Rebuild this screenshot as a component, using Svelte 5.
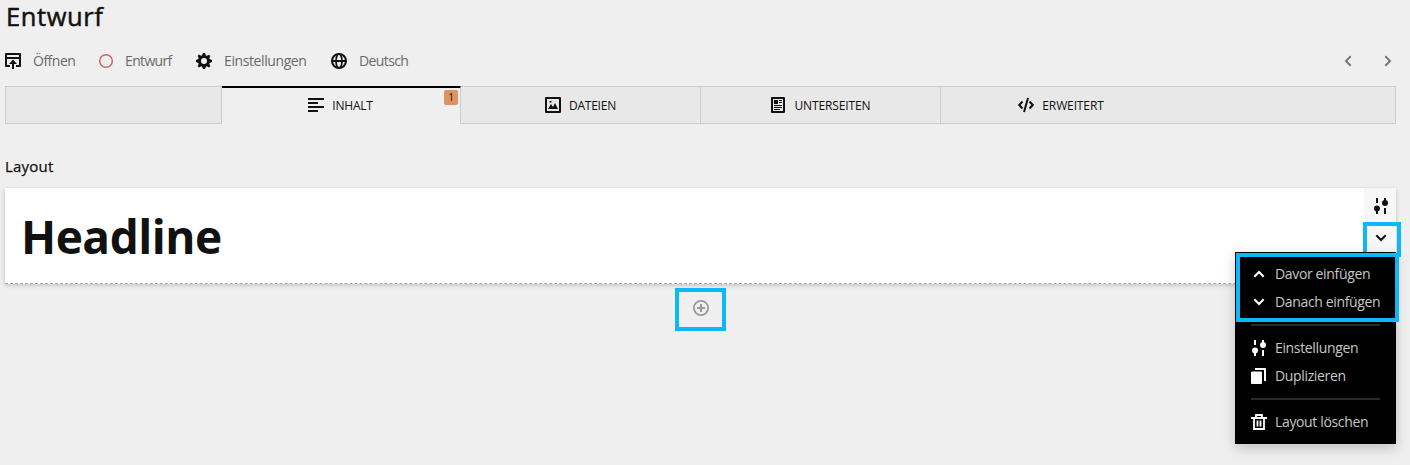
<script>
  const actions = [
    { icon: 'open', text: 'Öffnen', width: 93, ls: -0.5 },
    { icon: 'circle', text: 'Entwurf', width: 98, ls: -0.65 },
    { icon: 'cog', text: 'Einstellungen', width: 135, ls: -0.4 },
    { icon: 'globe', text: 'Deutsch', width: 90, ls: -0.6 }
  ];
  const tabs = [
    { icon: 'text', text: 'INHALT', badge: 1, active: true, ls: -0.2 },
    { icon: 'image', text: 'DATEIEN', ls: -0.25 },
    { icon: 'page', text: 'UNTERSEITEN', ls: -0.12 },
    { icon: 'code', text: 'ERWEITERT', ls: -0.12 }
  ];
  const groups = [
    [{ icon: 'up', text: 'Davor einfügen' }, { icon: 'down', text: 'Danach einfügen' }],
    [{ icon: 'settings', text: 'Einstellungen' }, { icon: 'copy', text: 'Duplizieren' }],
    [{ icon: 'trash', text: 'Layout löschen' }]
  ];
</script>

{#snippet icon(name)}
  <svg class="icon {name}" width="16" height="16" viewBox="0 0 16 16" fill="currentColor" aria-hidden="true">
    {#if name === 'open'}
      <path d="M1 0h14a1 1 0 0 1 1 1v12a1 1 0 0 1-1 1h-4v-2h3V6H2v6h3v2H1a1 1 0 0 1-1-1V1a1 1 0 0 1 1-1zm1 2v2h12V2z" fill-rule="evenodd" />
      <path d="M8 6.5 12 11H9v5H7v-5H4z" />
    {:else if name === 'circle'}
      <circle cx="8" cy="8" r="6.3" fill="none" stroke="currentColor" stroke-width="1.5" />
    {:else if name === 'cog'}
      <path fill-rule="evenodd" d="M13.3 5.2l1.1-2.1L13 1.7l-2.1 1.1c-.3-.2-.7-.3-1-.4L9 0H7l-.9 2.3c-.4.1-.7.2-1 .4L3 1.6 1.6 3l1.1 2.1c-.2.3-.3.7-.4 1L0 7v2l2.3.9c.1.4.3.7.4 1L1.6 13 3 14.4l2.1-1.1c.3.2.7.3 1 .4L7 16h2l.9-2.3c.4-.1.7-.3 1-.4l2.1 1.1 1.4-1.4-1.1-2.1c.2-.3.3-.7.4-1L16 9V7l-2.3-.9c-.1-.3-.2-.6-.4-.9zM8 11a3 3 0 1 1 0-6 3 3 0 0 1 0 6z" />
    {:else if name === 'globe'}
      <g fill="none" stroke="currentColor"><circle cx="8" cy="8" r="7" stroke-width="2" /><ellipse cx="8" cy="8" rx="3" ry="7" stroke-width="1.7" /><path d="M1 8h14" stroke-width="2" /></g>
    {:else if name === 'text'}
      <path d="M0 1h16v2H0zm0 4h10v2H0zm0 4h16v2H0zm0 4h10v2H0z" />
    {:else if name === 'image'}
      <path fill-rule="evenodd" d="M1 0h14a1 1 0 0 1 1 1v14a1 1 0 0 1-1 1H1a1 1 0 0 1-1-1V1a1 1 0 0 1 1-1zm1 2v12h12V2z" /><path d="M3 12l3-5 2 3 2-4 3 6z" /><circle cx="5.5" cy="4.8" r="1" />
    {:else if name === 'page'}
      <path fill-rule="evenodd" d="M2 0h12a1 1 0 0 1 1 1v14a1 1 0 0 1-1 1H2a1 1 0 0 1-1-1V1a1 1 0 0 1 1-1zm1 2v12h10V2z" /><path d="M4 3h4v4H4zm5 0h3v1H9zm0 2h3v1H9zM4 8h8v1H4zm0 2h8v1H4zm0 2h6v1H4z" />
    {:else if name === 'code'}
      <path d="m10 1-4 14M4.5 4.5 1.2 8l3.3 3.5M11.5 4.5 14.8 8l-3.3 3.5" fill="none" stroke="currentColor" stroke-width="2" />
    {:else if name === 'up'}
      <path d="M8 4.6 13.4 10 12 11.4l-4-4-4 4L2.6 10z" />
    {:else if name === 'down'}
      <path d="M8 11.4 2.6 6 4 4.6l4 4 4-4L13.4 6z" />
    {:else if name === 'left'}
      <path d="M4.6 8 10 2.6 11.4 4l-4 4 4 4L10 13.4z" />
    {:else if name === 'right'}
      <path d="M11.4 8 6 13.4 4.6 12l4-4-4-4L6 2.6z" />
    {:else if name === 'settings'}
      <path d="M3 0h2v5H3zm0 12h2v4H3zM11 0h2v5h-2zm0 10h2v6h-2z" /><circle cx="4" cy="10.5" r="3" /><circle cx="12" cy="5" r="3" />
    {:else if name === 'copy'}
      <path d="M4 0h10a1 1 0 0 1 1 1v12h-2V2H4z" /><path d="M1 3.5h9a1 1 0 0 1 1 1V15a1 1 0 0 1-1 1H1a1 1 0 0 1-1-1V4.500a1 1 0 0 1 1-1z" />
    {:else if name === 'trash'}
      <path d="M5 3V1h6v2M0 4h16M3 5v10h10V5M6.500 6.500v6M9.500 6.500v6" fill="none" stroke="currentColor" stroke-width="1.8" />
    {:else if name === 'add'}
      <circle cx="8" cy="8" r="7.1" fill="none" stroke="currentColor" stroke-width="1.8" /><path d="M7 4h2v3h3v2H9v3H7V9H4V7h3z" />
    {/if}
  </svg>
{/snippet}

<main>
  <h1>Entwurf</h1>
  <nav class="toolbar">
    {#each actions as a}
      <div class="action" style:width="{a.width}px">{@render icon(a.icon)}<span style:letter-spacing="{a.ls}px">{a.text}</span></div>
    {/each}
    <div class="pager">{@render icon('left')}{@render icon('right')}</div>
  </nav>
  <nav class="tabs">
    <div class="spacer"></div>
    {#each tabs as t}
      <div class="tab" class:active={t.active}>
        {@render icon(t.icon)}<span style:letter-spacing="{t.ls}px">{t.text}</span>
        {#if t.badge}<b class="badge">{t.badge}</b>{/if}
      </div>
    {/each}
  </nav>
  <h2>Layout</h2>
  <section class="layout">
    <div class="headline">Headline</div>
    <div class="side">
      <div class="tool">{@render icon('settings')}</div>
      <div class="tool focus">{@render icon('down')}</div>
    </div>
    <div class="menu">
      {#each groups as g}
        <div class="group">
          {#each g as item}
            <div class="item">{@render icon(item.icon)}<span>{item.text}</span></div>
          {/each}
        </div>
      {/each}
      <div class="outline"></div>
    </div>
  </section>
  <div class="add-box">{@render icon('add')}</div>
</main>

<style>
  :global(body) { background: #efefef; }
  main { box-sizing: border-box; width: 1410px; height: 465px; padding: 0 14px 0 5px; font-family: "Open Sans", "Noto Sans", sans-serif; color: #111; }
  .icon { flex: none; display: block; }
  h1 { margin: 0; height: 48px; padding-left: 1px; box-sizing: border-box; line-height: 32px; font-size: 25.5px; font-weight: 500; letter-spacing: 0.6px; -webkit-text-stroke: 0.5px #111; }
  .toolbar { display: flex; height: 26px; align-items: center; color: #111; }
  .action { display: flex; align-items: center; white-space: nowrap; }
  .action span { margin-left: 12px; font-size: 14px; line-height: 20px; color: #6a6a6a; }
  .action:nth-child(2) span { margin-left: 11px; }
  .circle { color: #c8666b; }
  .pager { display: flex; gap: 24px; margin-left: auto; color: #777; }
  .tabs { display: flex; height: 38px; margin-top: 12px; box-sizing: border-box; border: 1px solid #ccc; background: #e8e8e8; }
  .spacer { width: 215px; border-right: 1px solid #ccc; }
  .tab { position: relative; box-sizing: border-box; width: 240px; display: flex; align-items: center; justify-content: center; border-right: 1px solid #ccc; font-size: 12px; white-space: nowrap; }
  .tab span { margin-left: 8px; }
  .tab:last-child { border-right: 0; }
  .active { width: 239px; margin: -1px 0; padding: 0 1px 2px 0; background: #efefef; border-top: 2px solid #000; }
  .badge { position: absolute; right: 2px; top: 2px; width: 14px; height: 15px; border-radius: 2px; background: #de935f; font-size: 10px; font-weight: 400; line-height: 15px; text-align: center; }
  h2 { margin: 32px 0 11px; line-height: 21px; font-size: 15px; font-weight: 500; letter-spacing: 0.2px; -webkit-text-stroke: 0.25px #111; }
  .layout { position: relative; box-sizing: border-box; display: flex; height: 96px; background: #fff; border-bottom: 1px dashed #aaa; box-shadow: 0 1px 4px #0002, 0 2px 5px #0001; }
  .headline { flex: 1; padding: 15px 0 0 16px; line-height: 67px; font-size: 46px; font-weight: 700; letter-spacing: -0.5px; }
  .side { width: 32px; background: #f7f7f7; }
  .tool { box-sizing: border-box; height: 34px; padding: 2px 0 0 2px; display: flex; align-items: center; justify-content: center; }
  .focus { width: 38px; height: 35px; padding: 0 2px 4px 0; border: 4px solid #0bb9fb; margin-left: -1px; }
  .menu { position: absolute; right: 0; top: 64px; width: 161px; height: 192px; box-sizing: border-box; padding: 8px 16px; background: #000; color: #fff; box-shadow: 0 4px 12px #0003; }
  .group + .group { margin-top: 8px; padding-top: 8px; border-top: 2px solid #2b2b2b; }
  .item { height: 28px; display: flex; align-items: center; white-space: nowrap; }
  .item span { margin: -2px 0 0 8px; font-size: 14px; letter-spacing: -0.35px; color: #c7c7c7; }
  .outline { position: absolute; left: 1px; top: 1px; width: 163px; height: 69px; box-sizing: border-box; border: 4px solid #0bb9fb; }
  .add-box { box-sizing: border-box; width: 51px; height: 43px; margin: 4px 0 0 670px; display: flex; justify-content: center; padding-top: 8px; border: 4px solid #0bb9fb; color: #999; }
</style>
